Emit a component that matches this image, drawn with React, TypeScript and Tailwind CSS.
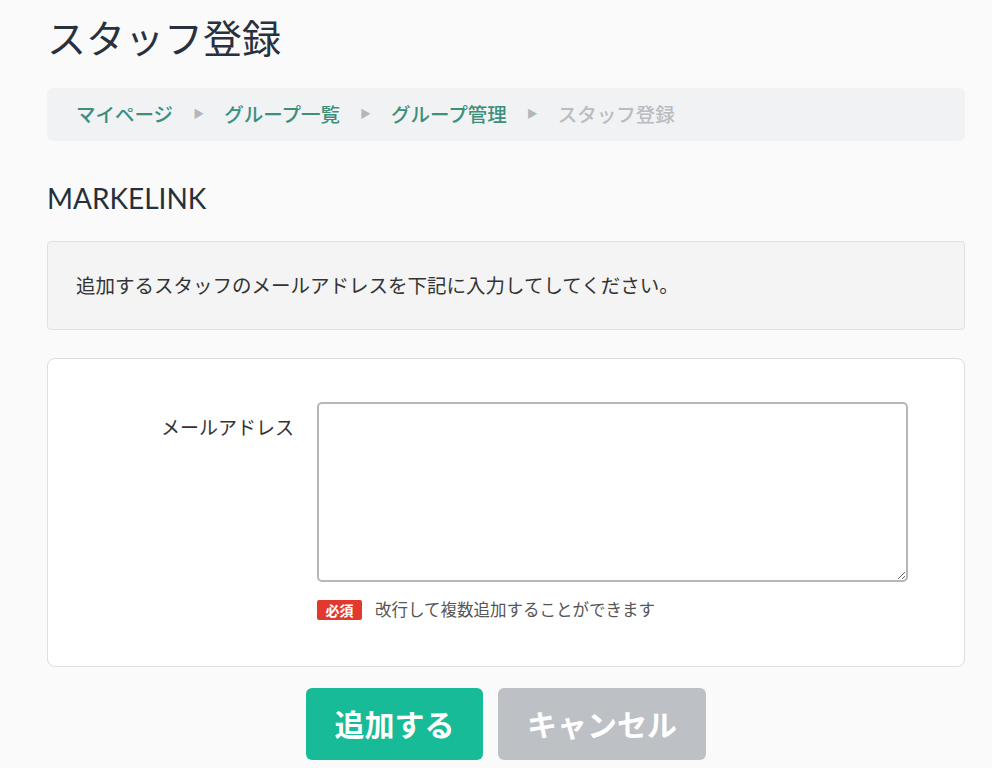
import React from "react";

const CRUMBS = [
  { label: "マイページ", link: true },
  { label: "グループ一覧", link: true },
  { label: "グループ管理", link: true },
  { label: "スタッフ登録", link: false },
];

const FONT = "font-['Lato','Noto_Sans_CJK_JP',sans-serif]";

export default function App() {
  return (
    <div className={`min-h-[768px] bg-[#fafafa] ${FONT}`}>
      <div className="ml-[47px] w-[918px] pt-[14px]">
        {/* Title */}
        <h1 className="text-[39px] leading-[48px] text-[#28313d]">スタッフ登録</h1>

        {/* Breadcrumb */}
        <nav className="mt-[26px] flex h-[53px] items-center rounded-md bg-[#f1f2f4] pl-[29px]">
          {CRUMBS.map((c, i) => (
            <div key={c.label} className="flex items-center">
              {i > 0 && (
                <span className="mx-[20px] text-[11px] text-[#b3b7bb]">▶</span>
              )}
              <span
                className={`text-[19.5px] font-medium ${
                  c.link ? "text-[#3d8f7a]" : "text-[#b9bcc0]"
                }`}
              >
                {c.label}
              </span>
            </div>
          ))}
        </nav>

        {/* Group name */}
        <h2 className="mt-[38px] text-[28px] leading-[38px] text-[#26303c]">
          MARKELINK
        </h2>

        {/* Info */}
        <div className="mt-[24px] flex h-[89px] items-center rounded-sm border border-[#e1e1e1] bg-[#f4f4f4] pl-[28px]">
          <p className="text-[19.5px] text-[#333]">
            追加するスタッフのメールアドレスを下記に入力してしてください。
          </p>
        </div>

        {/* Form */}
        <div className="mt-[28px] h-[309px] rounded-lg border border-[#dedede] bg-white pt-[43px]">
          <div className="flex">
            <label className="w-[269px] pr-[23px] pt-[12px] text-right text-[19px] text-[#333]">
              メールアドレス
            </label>
            <div>
              <textarea className="h-[180px] w-[591px] resize rounded-[5px] border-2 border-[#b4b8bd] bg-white outline-none" />
              <div className="mt-[10px] flex items-center">
                <span className="flex h-[20px] w-[45px] items-center justify-center rounded-[2px] bg-[#e2392e] text-[14px] font-bold text-white">
                  必須
                </span>
                <span className="ml-[13px] text-[16.5px] text-[#555]">
                  改行して複数追加することができます
                </span>
              </div>
            </div>
          </div>
        </div>

        {/* Buttons */}
        <div className="mt-[21px] flex justify-center gap-[15px]">
          <button className="flex h-[72px] w-[177px] items-center justify-center rounded-md bg-[#17bb97] text-[30px] font-bold text-white">
            追加する
          </button>
          <button className="flex h-[72px] w-[208px] items-center justify-center rounded-md bg-[#bdc1c5] text-[30px] font-bold text-white">
            キャンセル
          </button>
        </div>
      </div>
    </div>
  );
}
